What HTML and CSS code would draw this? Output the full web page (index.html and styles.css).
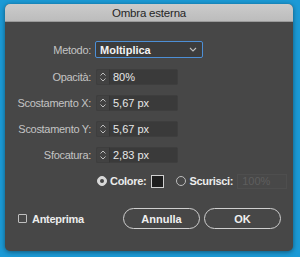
FILE: index.html
```html
<!DOCTYPE html>
<html lang="it">
<head>
    <meta charset="UTF-8">
    <title>Ombra esterna</title>
    <link rel="stylesheet" href="styles.css">
</head>
<body>
<div class="dlg">
    <div class="titlebar">Ombra esterna</div>
    <div class="content">
        <div class="form">
            <label class="lbl">Metodo:</label>
            <div class="sel">
                <span>Moltiplica</span>
                <svg width="8" height="5" viewBox="0 0 8 5"><path d="M1 1 L4 4 L7 1" fill="none" stroke="#bcbcbc" stroke-width="1.1"/></svg>
            </div>

            <label class="lbl">Opacità:</label>
            <div class="num">
                <span class="step"><svg width="8" height="12" viewBox="0 0 8 12"><path d="M1.5 4.5 L4 2 L6.5 4.5 M1.5 7.5 L4 10 L6.5 7.5" fill="none" stroke="#bdbdbd" stroke-width="1"/></svg></span>
                <span class="val">80%</span>
            </div>

            <label class="lbl">Scostamento X:</label>
            <div class="num">
                <span class="step"><svg width="8" height="12" viewBox="0 0 8 12"><path d="M1.5 4.5 L4 2 L6.5 4.5 M1.5 7.5 L4 10 L6.5 7.5" fill="none" stroke="#bdbdbd" stroke-width="1"/></svg></span>
                <span class="val">5,67 px</span>
            </div>

            <label class="lbl">Scostamento Y:</label>
            <div class="num">
                <span class="step"><svg width="8" height="12" viewBox="0 0 8 12"><path d="M1.5 4.5 L4 2 L6.5 4.5 M1.5 7.5 L4 10 L6.5 7.5" fill="none" stroke="#bdbdbd" stroke-width="1"/></svg></span>
                <span class="val">5,67 px</span>
            </div>

            <label class="lbl">Sfocatura:</label>
            <div class="num">
                <span class="step"><svg width="8" height="12" viewBox="0 0 8 12"><path d="M1.5 4.5 L4 2 L6.5 4.5 M1.5 7.5 L4 10 L6.5 7.5" fill="none" stroke="#bdbdbd" stroke-width="1"/></svg></span>
                <span class="val">2,83 px</span>
            </div>

            <span></span>
            <div class="colrow">
                <span class="radio on"></span>
                <span class="opt">Colore:</span>
                <span class="swatch"></span>
                <span class="radio"></span>
                <span class="opt">Scurisci:</span>
                <span class="dis">100%</span>
            </div>
        </div>

        <div class="foot">
            <div class="chk">
                <span class="box"></span>
                <span class="opt">Anteprima</span>
            </div>
            <div class="btns">
                <button class="btn">Annulla</button>
                <button class="btn">OK</button>
            </div>
        </div>
    </div>
</div>
</body>
</html>
```

FILE: styles.css
```css
html,body{margin:0;padding:0;}
body{background:#1b9ad6;width:300px;height:257px;overflow:hidden;font-family:"Liberation Sans",Arial,sans-serif;font-size:11px;}
.dlg{margin:4px 0 0 5px;width:288px;height:247px;background:#474747;border-radius:5px;box-shadow:0 1px 5px rgba(0,0,0,0.45);overflow:hidden;display:flex;flex-direction:column;}
.titlebar{height:18px;line-height:18px;text-align:center;color:#262626;font-size:11.5px;letter-spacing:-0.2px;background:linear-gradient(#cbcbcb,#bcbcbc);border-bottom:1px solid #9a9a9a;box-sizing:border-box;}
.content{flex:1;display:flex;flex-direction:column;padding:19px 12px 0 13px;}
.form{display:grid;grid-template-columns:78px max-content;column-gap:5px;row-gap:10px;align-items:center;justify-items:start;margin-left:-5px;}
.lbl{justify-self:end;color:#c4c4c4;letter-spacing:-0.3px;white-space:nowrap;}
.sel{width:108px;height:17px;box-sizing:border-box;border:1px solid #4d8fd6;border-radius:2px;background:#3c3c3c;display:flex;align-items:center;justify-content:space-between;padding:0 5px 0 4px;margin-left:-1px;margin-bottom:1px;}
.sel span{color:#f2f2f2;font-weight:bold;}
.num{display:flex;height:16px;width:82px;}
.step{width:14px;box-sizing:border-box;border:1px solid #3e3e3e;border-right:1px solid #353535;background:#424242;display:flex;align-items:center;justify-content:center;border-radius:2px 0 0 2px;}
.val{flex:1;background:#3a3a3a;border:1px solid #3e3e3e;border-left:none;color:#e8e8e8;line-height:14px;padding-left:3px;border-radius:0 2px 2px 0;}
.colrow{display:flex;align-items:center;height:16px;margin-left:1px;white-space:nowrap;}
.radio{width:10px;height:10px;box-sizing:border-box;border:1px solid #bdbdbd;border-radius:50%;margin-right:3px;flex:none;}
.radio.on{background:#d8d8d8;border-color:#d8d8d8;position:relative;}
.radio.on:after{content:"";position:absolute;left:2px;top:2px;width:4px;height:4px;border-radius:50%;background:#444;}
.opt{color:#ececec;font-weight:bold;letter-spacing:-0.3px;}
.swatch{width:13px;height:13px;box-sizing:border-box;border:1px solid #d0d0d0;background:#1e1e1e;margin:0 12px 0 5px;flex:none;}
.dis{width:50px;height:15px;box-sizing:border-box;border:1px solid #4e4e4e;background:#484848;color:#5e5e5e;line-height:13px;padding-left:4px;margin-left:4px;flex:none;}
.foot{display:flex;justify-content:space-between;align-items:center;margin-top:19px;}
.chk{display:flex;align-items:center;}
.box{width:9px;height:9px;box-sizing:border-box;border:1px solid #bfbfbf;border-radius:1px;margin-right:5px;}
.btns{display:flex;gap:4px;}
.btn{width:77px;height:21px;box-sizing:border-box;border:1.5px solid #cfcfcf;border-radius:11px;background:transparent;color:#f0f0f0;font-family:"Liberation Sans",Arial,sans-serif;font-size:11px;font-weight:bold;padding:0;}
```
